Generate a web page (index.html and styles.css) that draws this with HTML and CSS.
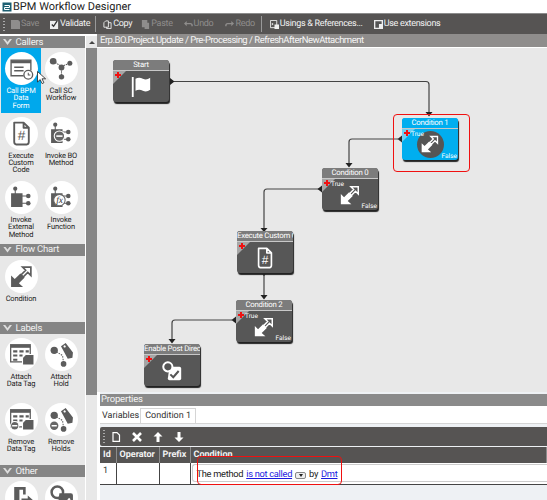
FILE: index.html
```html
<!DOCTYPE html>
<html lang="en">
  <head>
    <meta charset="UTF-8" />
    <meta name="viewport" content="width=device-width, initial-scale=1.0" />
    <title>BPM Workflow Designer</title>
    <link rel="stylesheet" href="styles.css">
  </head>
  <body>
    <svg class="defs" width="0" height="0">
      <symbol id="i-cond" viewBox="0 0 24 24">
        <path fill="currentColor" d="M2 22V11l3.500 3.500L11 9l4 4-5.500 5.500L13.500 22z" />
        <path fill="none" stroke="currentColor" stroke-width="1.600" d="M13 3h8v8l-3-3-4.500 4.500-2-2L16 6z" />
      </symbol>
      <symbol id="i-doc" viewBox="0 0 24 24">
        <path fill="none" stroke="currentColor" stroke-width="1.800" stroke-linejoin="round" d="M5 1.500h9l5 5V20q0 2.500-2 2.500H7q-2 0-2-2.500zM14 1.500v5h5" />
        <text x="12" y="18.500" class="hash" fill="currentColor" text-anchor="middle">#</text>
      </symbol>
      <symbol id="i-method" viewBox="0 0 24 24">
        <circle cx="6" cy="3.500" r="2" fill="currentColor" />
        <path fill="currentColor" d="M5.500 4h1v4h-1zM2 8h11v13H2zM13 10h4v1h-4zM13 17h4v1h-4z" />
        <circle cx="18.500" cy="10.500" r="2.200" fill="currentColor" />
        <circle cx="18.500" cy="17.500" r="2.200" fill="currentColor" />
      </symbol>
      <symbol id="i-tag" viewBox="0 0 24 24">
        <path fill="none" stroke="currentColor" stroke-dasharray="1.500 1" d="M5 8l8 5 1 7" />
        <circle cx="5" cy="8" r="3.500" fill="currentColor" />
        <circle cx="14" cy="21" r="2.700" fill="currentColor" />
        <path fill="currentColor" fill-rule="evenodd" d="M11.500 4L16 1l7 9-.5 5-4.500 1zM15 3.200a1.100 1.100 0 1 0 .01 0z" />
      </symbol>
      <symbol id="i-data" viewBox="0 0 24 24">
        <path fill="currentColor" d="M1 2h20v3H1z" />
        <path fill="none" stroke="currentColor" stroke-width="1.200" d="M1.600 5h18.800v14H1.600z" />
        <path fill="currentColor" d="M4 8h4v2H4zM10 8h4v2h-4zM16 8h3v2h-3zM4 12h4v2H4zM10 12h3v2h-3zM4 16h4v2H4z" />
        <path fill="currentColor" stroke="#fff" d="M13 15l3-3h8v10H13z" />
      </symbol>
      <symbol id="i-post" viewBox="0 0 24 24">
        <path fill="currentColor" d="M10 8h11q2 0 2 2v11q0 2-2 2H10q-2 0-2-2z" />
        <circle cx="8" cy="7" r="5.500" fill="none" stroke="currentColor" stroke-width="2.400" />
        <path fill="none" stroke="#fff" stroke-width="2" d="M11 17l3 3 6-7" />
      </symbol>
    </svg>

    <div class="titlebar">
      <svg class="app-icon" viewBox="0 0 10 10">
        <rect x="0.500" y="0.500" width="9" height="9" fill="#1c5f72" />
        <path d="M2.500 3.500h5v2h-5v2h5" fill="none" stroke="#fff" />
      </svg>
      <span>BPM Workflow Designer</span>
    </div>

    <div class="toolbar">
      <span class="grip"></span>
      <button class="tool off"><svg viewBox="0 0 10 10"><path fill="currentColor" d="M0 0h8l2 2v8H0z" /></svg>Save</button>
      <button class="tool ml-10"><svg viewBox="0 0 10 10"><path fill="#eee" d="M0 1h9v9H0z" /><path fill="none" stroke="#333" stroke-width="1.500" d="M2 5l2 2 4-6" /></svg>Validate</button>
      <span class="sep"></span>
      <button class="tool"><svg viewBox="0 0 10 10"><path fill="none" stroke="#eee" d="M1 3l2-2h3v7H1zM6 3h3v6.500H4V8" /></svg>Copy</button>
      <button class="tool off ml-8"><svg viewBox="0 0 10 10"><path fill="currentColor" d="M1 0h6v3h2v7H4V8H1z" /></svg>Paste</button>
      <button class="tool off ml-10"><svg viewBox="0 0 10 10"><path fill="none" stroke="currentColor" stroke-width="1.600" d="M2 4h5q2 0 2 2v1" /><path fill="currentColor" d="M0 4l3-3v6z" /></svg>Undo</button>
      <button class="tool off ml-11"><svg viewBox="0 0 10 10"><path fill="none" stroke="currentColor" stroke-width="1.600" d="M8 4H3Q1 4 1 6v1" /><path fill="currentColor" d="M10 4L7 1v6z" /></svg>Redo</button>
      <span class="sep wide"></span>
      <button class="tool"><svg viewBox="0 0 10 10"><path fill="none" stroke="#eee" d="M.5.500h7v8h-7z" /><path fill="#eee" d="M2 3l2 1.500L2 6zM5 5h5v5H5z" /></svg>Usings &amp; References...</button>
      <button class="tool ml-10"><svg viewBox="0 0 10 10"><path fill="#eee" d="M0 0h10v10H0z" /><path fill="#555" d="M1.500 1.500h7v3h-3v4h-4z" /></svg>Use extensions</button>
    </div>

    <div class="workspace">
      <aside class="sidebar">
        <div class="palette">
          <h3 class="group"><span class="chev"></span>Callers</h3>
          <div class="tiles">
            <div class="tile selected">
              <span class="disc">
                <svg viewBox="0 0 24 24">
                  <path fill="none" stroke="currentColor" stroke-width="1.300" d="M21 14V4H2v15h12" />
                  <path fill="currentColor" d="M2 4h19v3H2zM5 10h9v1.400H5zM5 13.500h9v1.400H5z" />
                  <circle cx="18.500" cy="18" r="4.200" fill="#fff" stroke="currentColor" stroke-width="1.300" />
                  <path fill="none" stroke="currentColor" d="M18.500 16v2.200h2" />
                </svg>
              </span>
              <span class="cap">Call BPM<br>Data<br>Form</span>
              <svg class="cursor" viewBox="0 0 10 14"><path fill="#fff" stroke="#222" stroke-width=".8" d="M.5.500v10.500l2.700-2.400 1.900 4 1.800-.9-1.900-3.900h3.600z" /></svg>
            </div>
            <div class="tile">
              <span class="disc">
                <svg viewBox="0 0 24 24">
                  <path fill="none" stroke="currentColor" stroke-dasharray="1.500 .8" d="M4 5l8 5 8-3M12 10v9" />
                  <circle cx="4" cy="5" r="3.200" fill="currentColor" />
                  <circle cx="12" cy="11" r="2.800" fill="currentColor" />
                  <circle cx="20" cy="7" r="2.400" fill="currentColor" />
                  <circle cx="12" cy="20" r="2.600" fill="currentColor" />
                </svg>
              </span>
              <span class="cap">Call SC<br>Workflow</span>
            </div>
            <div class="tile">
              <span class="disc"><svg><use href="#i-doc" /></svg></span>
              <span class="cap">Execute<br>Custom<br>Code</span>
            </div>
            <div class="tile">
              <span class="disc">
                <svg><use href="#i-method" /></svg>
                <svg class="over" viewBox="0 0 24 24"><circle cx="10" cy="14.500" r="5" fill="#666" stroke="#fff" /><path stroke="#fff" stroke-width="1.500" d="M7 14.500h6" /></svg>
              </span>
              <span class="cap">Invoke BO<br>Method</span>
            </div>
            <div class="tile">
              <span class="disc"><svg><use href="#i-method" /></svg></span>
              <span class="cap">Invoke<br>External<br>Method</span>
            </div>
            <div class="tile">
              <span class="disc">
                <svg><use href="#i-method" /></svg>
                <svg class="over" viewBox="0 0 24 24"><circle cx="10" cy="14.500" r="5.500" fill="#fff" stroke="#666" /><text x="10" y="17.500" class="fx" text-anchor="middle" fill="#333">fx</text></svg>
              </span>
              <span class="cap">Invoke<br>Function</span>
            </div>
          </div>

          <h3 class="group"><span class="chev"></span>Flow Chart</h3>
          <div class="tiles">
            <div class="tile">
              <span class="disc"><svg><use href="#i-cond" /></svg></span>
              <span class="cap">Condition</span>
            </div>
          </div>

          <h3 class="group"><span class="chev"></span>Labels</h3>
          <div class="tiles">
            <div class="tile">
              <span class="disc"><svg><use href="#i-data" /></svg></span>
              <span class="cap">Attach<br>Data Tag</span>
            </div>
            <div class="tile">
              <span class="disc"><svg><use href="#i-tag" /></svg></span>
              <span class="cap">Attach<br>Hold</span>
            </div>
            <div class="tile">
              <span class="disc">
                <svg><use href="#i-data" /></svg>
                <svg class="over" viewBox="0 0 24 24"><circle cx="5.500" cy="18" r="4" fill="#666" stroke="#fff" /><path stroke="#fff" stroke-width="1.400" d="M3 18h5" /></svg>
              </span>
              <span class="cap">Remove<br>Data Tag</span>
            </div>
            <div class="tile">
              <span class="disc">
                <svg><use href="#i-tag" /></svg>
                <svg class="over" viewBox="0 0 24 24"><circle cx="5" cy="18" r="4" fill="#666" /><path stroke="#fff" stroke-width="1.400" d="M2.500 18h5" /></svg>
              </span>
              <span class="cap">Remove<br>Holds</span>
            </div>
          </div>

          <h3 class="group"><span class="chev"></span>Other</h3>
          <div class="tiles">
            <div class="tile">
              <span class="disc">
                <svg viewBox="0 0 24 24"><path fill="currentColor" d="M5 2h11v7h-2.500V4.500H10V24H5z" /><path fill="currentColor" d="M12 13h6v-3l5 4.500-5 4.500v-3h-6z" /></svg>
              </span>
            </div>
            <div class="tile">
              <span class="disc"><svg><use href="#i-post" /></svg></span>
            </div>
          </div>
        </div>
        <div class="scrollbar">
          <span class="scroll-up"></span>
          <span class="thumb"></span>
        </div>
      </aside>

      <main class="main">
        <div class="crumbs">Erp.BO.Project.Update / Pre-Processing / RefreshAfterNewAttachment</div>

        <div class="canvas">
          <svg class="wires" width="450" height="345" viewBox="97 48 450 345">
            <g fill="none" stroke="#444" stroke-width="1.200">
              <path d="M174 81.500H426q3 0 3 3V113" />
              <path d="M398 139H352q-3 0-3 3V163" />
              <path d="M319 189H267q-3 0-3 3V228" />
              <path d="M264 275V296" />
              <path d="M232 320H175q-3 0-3 3V340" />
            </g>
            <g fill="#222">
              <path d="M170 78l4.500 3.500-4.500 3.500zM425.500 112h7l-3.500 4.500zM402 135.500v7l-4.500-3.500zM345.500 163h7l-3.500 4.500zM322 185.500v7l-4.500-3.500z" />
              <path d="M260.500 228h7l-3.500 4zM260.500 272h7l-3.500 4zM260.500 295h7l-3.500 4.500zM236 316.500v7l-4.500-3.500zM168.500 339h7l-3.500 4.500z" />
            </g>
          </svg>

          <div class="node n-start">
            <div class="node-head">Start</div>
            <div class="node-body">
              <span class="corner"></span><span class="plus"></span>
              <svg class="node-icon" viewBox="0 0 24 24">
                <path fill="currentColor" d="M2 1h2v22H2zM6 3q4-2 8 0t8-1v13q-4 3-8 1t-8 0z" />
              </svg>
            </div>
          </div>

          <div class="hilite n-hilite"></div>
          <div class="node active n-c1">
            <div class="node-head">Condition 1</div>
            <div class="node-body">
              <span class="corner"></span><span class="plus"></span>
              <span class="true">True</span>
              <span class="round"><svg class="round-icon"><use href="#i-cond" /></svg></span>
              <span class="false">False</span>
            </div>
          </div>

          <div class="node n-c0">
            <div class="node-head">Condition 0</div>
            <div class="node-body">
              <span class="corner"></span><span class="plus"></span>
              <span class="true">True</span>
              <svg class="node-icon"><use href="#i-cond" /></svg>
              <span class="false">False</span>
            </div>
          </div>

          <div class="node n-exec">
            <div class="node-head">Execute Custom Code</div>
            <div class="node-body">
              <span class="corner"></span><span class="plus"></span>
              <svg class="node-icon"><use href="#i-doc" /></svg>
            </div>
          </div>

          <div class="node n-c2">
            <div class="node-head">Condition 2</div>
            <div class="node-body">
              <span class="corner"></span><span class="plus"></span>
              <span class="true">True</span>
              <svg class="node-icon"><use href="#i-cond" /></svg>
              <span class="false">False</span>
            </div>
          </div>

          <div class="node n-post">
            <div class="node-head">Enable Post Directive</div>
            <div class="node-body">
              <span class="corner"></span><span class="plus"></span>
              <svg class="node-icon post-icon" viewBox="0 0 24 24">
                <path fill="#fff" d="M9 7h12q2 0 2 2v12q0 2-2 2H9q-2 0-2-2z" />
                <circle cx="7" cy="7" r="5.500" fill="#555" stroke="#fff" stroke-width="2.400" />
                <path fill="none" stroke="#555" stroke-width="2.400" d="M10 16l3.500 3.500L20 12" />
              </svg>
            </div>
          </div>
        </div>

        <section class="props">
          <div class="props-title">Properties</div>
          <div class="tabs">
            <span class="tab">Variables</span>
            <span class="tab current">Condition 1</span>
          </div>
          <div class="props-tools">
            <span class="grip short"></span>
            <svg viewBox="0 0 10 10"><path fill="none" stroke="#fff" stroke-width="1.200" d="M2 .6h4l2.500 2.500v6.300H2z" /></svg>
            <svg viewBox="0 0 10 10"><path stroke="#fff" stroke-width="2.600" d="M1 1l8 8M9 1l-8 8" /></svg>
            <svg viewBox="0 0 10 10"><path fill="#fff" d="M5 0l4.500 4.500H6.500V10h-3V4.500H.5z" /></svg>
            <svg viewBox="0 0 10 10"><path fill="#fff" d="M5 10L.5 5.500h3V0h3v5.500h3z" /></svg>
          </div>
          <table class="grid">
            <thead>
              <tr>
                <th class="c-id">Id</th>
                <th class="c-op">Operator</th>
                <th class="c-pre">Prefix</th>
                <th>Condition</th>
              </tr>
            </thead>
            <tbody>
              <tr>
                <td>1</td>
                <td></td>
                <td></td>
                <td>
                  <div class="cond-cell">
                    The method <a>is not called</a>
                    <span class="drop"></span>
                    by <a>Dmt</a>
                  </div>
                </td>
              </tr>
            </tbody>
          </table>
          <div class="hilite n-cond"></div>
        </section>
      </main>
    </div>
  </body>
</html>
```

FILE: styles.css
```css
* {
  box-sizing: border-box;
}

html,
body {
  margin: 0;
  height: 500px;
  overflow: hidden;
}

body {
  font-family: Roboto, "Open Sans", sans-serif;
  text-rendering: geometricPrecision;
  background: #fff;
  color: #333;
  display: flex;
  flex-direction: column;
}

.defs {
  position: absolute;
}

.hash {
  font: 13px "Liberation Sans", sans-serif;
}

.fx {
  font: italic 9px "Liberation Serif", serif;
}

/* window chrome */
.titlebar {
  height: 13px;
  flex: none;
  display: flex;
  align-items: center;
  gap: 1px;
  padding-left: 2px;
  font-size: 11px;
  line-height: 13px;
  color: #222;
}

.app-icon {
  width: 10px;
  height: 10px;
}

.toolbar {
  height: 21px;
  flex: none;
  display: flex;
  align-items: center;
  padding-left: 3px;
  background: #565453;
  border-top: 1px solid #8c8c8c;
}

.grip {
  width: 2px;
  height: 13px;
  margin-right: 6px;
  background: repeating-linear-gradient(#aaa 0 1px, transparent 1px 3px);
}

.grip.short {
  margin-right: -5px;
}

.tool {
  display: flex;
  align-items: center;
  gap: 1px;
  padding: 0;
  border: 0;
  background: none;
  color: #f2f2f2;
  font: 9px Roboto, sans-serif;
  letter-spacing: -0.3px;
  text-rendering: geometricPrecision;
}

.tool svg {
  width: 9px;
  height: 9px;
}

.tool.off {
  color: #8f8d8c;
}

.ml-8 {
  margin-left: 9px;
}

.ml-10 {
  margin-left: 11px;
}

.ml-11 {
  margin-left: 12px;
}

.sep {
  width: 1px;
  height: 16px;
  margin: 0 7px 0 5px;
  background: #999;
}

.sep.wide {
  margin: 0 8px 0 6px;
}

.workspace {
  flex: 1;
  display: flex;
  min-height: 0;
}

/* left palette */
.sidebar {
  width: 97px;
  flex: none;
  display: flex;
  background: #fff;
  padding-top: 2px;
}

.palette {
  width: 85px;
  margin-right: 1px;
  background: #e8e8e8;
  overflow: hidden;
}

.group {
  height: 12px;
  margin: 0;
  padding-left: 3px;
  display: flex;
  align-items: center;
  gap: 3.500px;
  background: #858585;
  color: #f2f2f2;
  font-size: 9.500px;
  font-weight: 400;
  letter-spacing: -0.2px;
}

.tiles + .group {
  margin-top: 2px;
}

.chev {
  width: 9px;
  height: 6px;
  background: #ddd;
  clip-path: polygon(0 0, 25% 0, 50% 50%, 75% 0, 100% 0, 50% 100%);
}

.tiles {
  display: grid;
  grid-template-columns: 40px 40px;
  grid-auto-rows: 64.500px;
  padding-left: 1px;
}

.tile {
  position: relative;
  display: flex;
  flex-direction: column;
  align-items: center;
  padding-top: 4px;
  font-size: 7.500px;
  line-height: 7.400px;
  letter-spacing: -0.15px;
  text-align: center;
  color: #222;
}

.tile.selected {
  z-index: 2;
  background: #00a8ec;
  color: #fff;
}

.cursor {
  position: absolute;
  left: 36px;
  top: 23px;
  width: 10px;
  height: 14px;
}

.disc {
  position: relative;
  width: 33px;
  height: 33px;
  flex: none;
  display: flex;
  align-items: center;
  justify-content: center;
  border-radius: 50%;
  background: #fff;
  color: #5c5c5c;
}

.disc svg {
  width: 25px;
  height: 25px;
}

.disc .over {
  position: absolute;
  left: 4px;
  top: 4px;
}

.cap {
  margin-top: 2px;
  white-space: nowrap;
}

.scrollbar {
  width: 11px;
  display: flex;
  flex-direction: column;
  background: #e8e8e8;
}

.scroll-up {
  height: 12px;
  flex: none;
  display: flex;
  align-items: center;
  justify-content: center;
}

.scroll-up::before {
  content: "";
  border: 3px solid transparent;
  border-top: 0;
  border-bottom: 3px solid #444;
}

.thumb {
  height: 347px;
  background: #868686;
}

/* designer */
.main {
  flex: 1;
  min-width: 0;
  display: flex;
  flex-direction: column;
}

.crumbs {
  height: 14px;
  flex: none;
  padding-left: 3px;
  background: #8f8d8c;
  border-bottom: 1px solid #fff;
  color: #f5f5f5;
  font-size: 9.500px;
  line-height: 13px;
  letter-spacing: -0.5px;
  white-space: nowrap;
}

.canvas {
  position: relative;
  height: 344px;
  flex: none;
  background: #e8e8e8;
  overflow: hidden;
}

.wires {
  position: absolute;
  left: 0;
  top: 0;
}

.node {
  position: absolute;
  width: 56px;
  height: 42px;
  display: flex;
  flex-direction: column;
  border-radius: 3px;
  background: #575757;
  color: #fff;
  box-shadow: 1px 2px 1px #222;
  overflow: hidden;
}

.node-head {
  height: 11px;
  flex: none;
  background: #7c7c7c;
  border-bottom: 1px solid #c8c8c8;
  font-size: 7.800px;
  line-height: 10px;
  letter-spacing: -0.25px;
  text-align: center;
  white-space: nowrap;
  overflow: hidden;
}

.node-body {
  position: relative;
  flex: 1;
  display: flex;
  align-items: center;
  justify-content: center;
}

.corner {
  position: absolute;
  left: 0;
  top: 0;
  width: 13px;
  height: 13px;
  background: #a6a6a6;
  clip-path: polygon(0 0, 100% 0, 0 100%);
}

.plus {
  position: absolute;
  left: 2px;
  top: 1px;
  width: 6px;
  height: 6px;
  background:
    linear-gradient(#f01010, #f01010) center / 6px 2px no-repeat,
    linear-gradient(#f01010, #f01010) center / 2px 6px no-repeat;
}

.true,
.false {
  position: absolute;
  font-size: 6.500px;
  line-height: 8px;
}

.true {
  left: 9px;
  top: 1px;
}

.false {
  right: 1px;
  bottom: 0;
}

.node-icon {
  width: 22px;
  height: 22px;
}

.post-icon {
  width: 20px;
  height: 20px;
}

.active {
  background: #00aeef;
}

.active .node-head {
  background: #00aeef;
}

.active .corner {
  background: #6fd0f2;
}

.round {
  width: 27px;
  height: 27px;
  margin-bottom: 1px;
  display: flex;
  align-items: center;
  justify-content: center;
  border-radius: 50%;
  background: #555;
}

.round-icon {
  width: 20px;
  height: 20px;
}

.hilite {
  position: absolute;
  border: 1px solid #f01010;
  border-radius: 4px;
  background: rgba(255, 255, 255, 0.04);
}

.n-start { left: 16px; top: 12px; }
.n-c1 { left: 305px; top: 70px; }
.n-c0 { left: 225px; top: 120px; }
.n-exec { left: 140px; top: 183px; }
.n-c2 { left: 139px; top: 252px; }
.n-post { left: 47px; top: 296px; }
.n-hilite { left: 296px; top: 66px; width: 77px; height: 58px; }

/* properties panel */
.props {
  position: relative;
  flex: 1;
  margin-left: 3px;
  background: #eef1f4;
}

.props-title {
  height: 12px;
  margin-top: 2px;
  padding-left: 1px;
  background: #8a8a8a;
  color: #f5f5f5;
  font-size: 9.500px;
  line-height: 12px;
  letter-spacing: -0.2px;
}

.tabs {
  height: 18px;
  display: flex;
  align-items: flex-end;
  border-bottom: 1px solid #d5d5d5;
  background: #fff;
  font-size: 9px;
}

.tab {
  height: 14px;
  padding: 0 1px 0 2px;
  line-height: 14px;
}

.tab.current {
  height: 15px;
  padding: 0 4px;
  border: 1px solid #d5d5d5;
  border-bottom: 0;
  background: #fff;
}

.props-tools {
  height: 19px;
  margin-top: 3px;
  display: flex;
  align-items: center;
  gap: 11px;
  padding-left: 3px;
  background: #565453;
  border-radius: 2px 0 0 2px;
}

.props-tools svg {
  width: 10px;
  height: 10px;
}

.grid {
  width: 100%;
  margin-top: 1px;
  border-collapse: collapse;
  table-layout: fixed;
  background: #fff;
  font-size: 9px;
}

.grid th {
  height: 16px;
  padding: 0 3px;
  background: #565453;
  border-right: 1px solid #8c8c8c;
  color: #f2f2f2;
  font-weight: 700;
  text-align: left;
}

.grid td {
  height: 21px;
  padding: 3px 3px 0;
  border-right: 1px solid #444;
  border-bottom: 1px solid #444;
  vertical-align: top;
}

.c-id { width: 16px; }
.c-op { width: 43px; }
.c-pre { width: 31px; }

.grid td:last-child {
  padding: 1px 0 0 1px;
  border-right: 0;
}

.cond-cell {
  height: 18px;
  padding: 2px 0 0 4px;
  border: 1px solid #ccc;
  border-right: 0;
  border-radius: 3px 0 0 3px;
  display: flex;
  align-items: center;
  gap: 3px;
  color: #222;
  font-size: 9.300px;
  letter-spacing: -0.3px;
  white-space: nowrap;
}

.cond-cell a {
  color: #1a1ae0;
  text-decoration: underline;
}

.drop {
  width: 11px;
  height: 7px;
  margin-top: 3px;
  display: flex;
  align-items: center;
  justify-content: center;
  border: 1px solid #888;
  border-radius: 2px;
  background: #eee;
}

.drop::before {
  content: "";
  border: 2.500px solid transparent;
  border-bottom: 0;
  border-top: 3px solid #222;
}

.n-cond {
  left: 97px;
  top: 64px;
  width: 145px;
  height: 29px;
  border-width: 1.500px;
  background: none;
}
```
